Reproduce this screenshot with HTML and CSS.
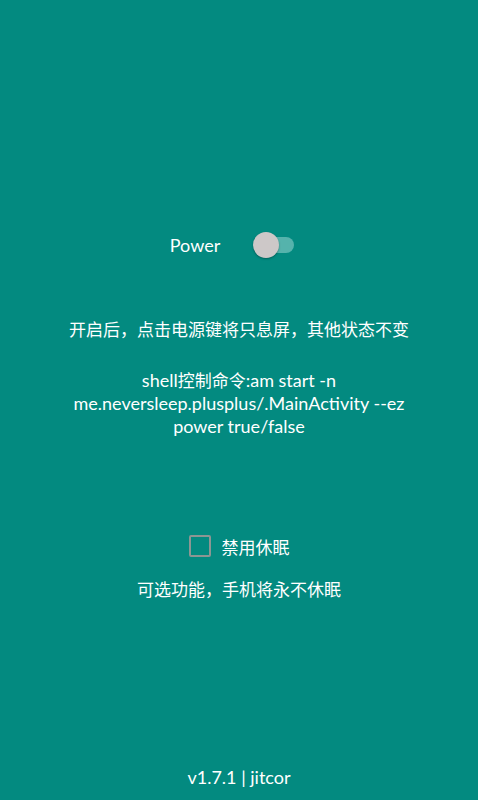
FILE: index.html
```html
<!DOCTYPE html>
<html>
<head>
<meta charset="utf-8">
<link rel="stylesheet" href="styles.css">
</head>
<body>
<div class="page">
  <div class="power-row">
    <span class="power-label">Power</span>
    <span class="switch"><span class="track"></span><span class="thumb"></span></span>
  </div>
  <p class="desc">开启后，点击电源键将只息屏，其他状态不变</p>
  <p class="cmd">shell<span class="cjk">控制命令</span>:am start -n<br>me.neversleep.plusplus/.MainActivity --ez<br>power true/false</p>
  <div class="check-row">
    <span class="checkbox"></span>
    <span class="check-label">禁用休眠</span>
  </div>
  <p class="note">可选功能，手机将永不休眠</p>
  <div class="spacer"></div>
  <p class="version">v1.7.1 | jitcor</p>
</div>
</body>
</html>
```
FILE: styles.css
```css
html, body {
  margin: 0;
  padding: 0;
  height: 100%;
}
body {
  background: #038a80;
  color: #ffffff;
  font-family: Lato, "Noto Sans CJK SC", sans-serif;
  font-size: 17px;
}
.page {
  display: flex;
  flex-direction: column;
  align-items: center;
  height: 800px;
  box-sizing: border-box;
  padding-top: 231px;
}
.power-row {
  display: flex;
  align-items: center;
  height: 28px;
  gap: 33px;
  margin-right: 14px;
}
.power-label {
  font-size: 18px;
}
.switch {
  position: relative;
  width: 41px;
  height: 28px;
  display: inline-block;
}
.track {
  position: absolute;
  left: 7px;
  top: 6px;
  width: 34px;
  height: 16px;
  border-radius: 8px;
  background: #55b3ac;
}
.thumb {
  position: absolute;
  left: 0;
  top: 1px;
  width: 26px;
  height: 26px;
  border-radius: 50%;
  background: #cdc8c8;
  box-shadow: 0 1px 2px rgba(0,0,0,0.3);
}
.desc {
  margin: 0;
  margin-top: 59px;
  font-size: 17px;
  line-height: 23px;
  text-align: center;
}
.cmd {
  margin: 0;
  margin-top: 28px;
  font-size: 18px;
  line-height: 23px;
  text-align: center;
}
.cjk {
  font-size: 17px;
}
.check-row {
  display: flex;
  align-items: center;
  gap: 11px;
  margin-top: 95px;
  height: 26px;
}
.checkbox {
  width: 18px;
  height: 18px;
  border: 2px solid #8c9693;
  border-radius: 2px;
}
.check-label {
  font-size: 17px;
}
.note {
  margin: 0;
  margin-top: 19px;
  font-size: 17px;
  line-height: 23px;
  text-align: center;
}
.spacer {
  flex: 1;
}
.version {
  margin: 0 0 11px 0;
  font-size: 18px;
  line-height: 23px;
  text-align: center;
}
```
